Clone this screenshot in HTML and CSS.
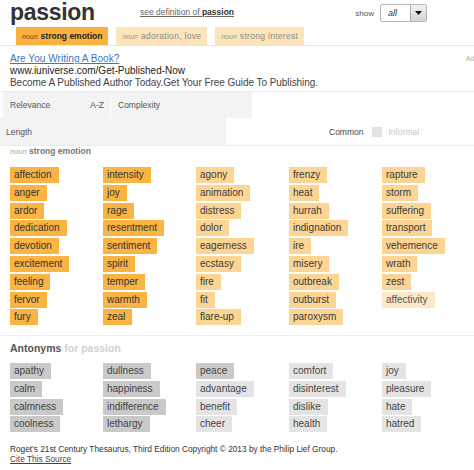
FILE: index.html
```html
<!DOCTYPE html>
<html>
<head>
<meta charset="utf-8">
<link rel="stylesheet" href="styles.css">
</head>
<body>
<div class="top">
  <h1 class="word">passion</h1>
  <a class="def" href="#">see definition of <b>passion</b></a>
  <div class="show">
    <span class="show-label">show</span>
    <div class="select">
      <span class="val">all</span>
      <span class="btn"><svg width="7" height="4" viewBox="0 0 7 4"><path d="M0 0H7L3.5 4Z" fill="#111"/></svg></span>
    </div>
  </div>
</div>
<div class="tabs">
  <span class="tab active"><i>noun</i>strong emotion</span>
  <span class="tab"><i>noun</i>adoration, love</span>
  <span class="tab"><i>noun</i>strong interest</span>
</div>
<div class="ad">
  <div class="ad-lines">
    <a class="ad-title" href="#">Are You Writing A Book?</a>
    <div class="ad-url">www.iuniverse.com/Get-Published-Now</div>
    <div class="ad-text">Become A Published Author Today.Get Your Free Guide To Publishing.</div>
  </div>
  <span class="ad-label">Ad</span>
</div>
<div class="filters">
  <div class="frow1">
    <div class="cell1"><span>Relevance</span><span>A-Z</span></div>
    <div class="cell2">Complexity</div>
  </div>
  <div class="frow2">
    <div class="len">Length</div>
    <span class="common">Common</span>
    <span class="chk"></span>
    <span class="informal">Informal</span>
  </div>
</div>
<div class="sense"><i>noun</i> strong emotion</div>
<div class="grid syn">
  <span class="t s1">affection</span><span class="t s1">anger</span><span class="t s1">ardor</span><span class="t s1">dedication</span><span class="t s1">devotion</span><span class="t s1">excitement</span><span class="t s1">feeling</span><span class="t s1">fervor</span><span class="t s1">fury</span>
  <span class="t s1">intensity</span><span class="t s1">joy</span><span class="t s1">rage</span><span class="t s1">resentment</span><span class="t s1">sentiment</span><span class="t s1">spirit</span><span class="t s1">temper</span><span class="t s1">warmth</span><span class="t s1">zeal</span>
  <span class="t s2">agony</span><span class="t s2">animation</span><span class="t s2">distress</span><span class="t s2">dolor</span><span class="t s2">eagerness</span><span class="t s2">ecstasy</span><span class="t s2">fire</span><span class="t s2">fit</span><span class="t s2">flare-up</span>
  <span class="t s2">frenzy</span><span class="t s2">heat</span><span class="t s2">hurrah</span><span class="t s2">indignation</span><span class="t s2">ire</span><span class="t s2">misery</span><span class="t s2">outbreak</span><span class="t s2">outburst</span><span class="t s2">paroxysm</span>
  <span class="t s2">rapture</span><span class="t s2">storm</span><span class="t s2">suffering</span><span class="t s2">transport</span><span class="t s2">vehemence</span><span class="t s2">wrath</span><span class="t s2">zest</span><span class="t s3">affectivity</span>
</div>
<div class="ant">
  <div class="ant-head">Antonyms <span>for passion</span></div>
  <div class="grid antg">
    <span class="t a1">apathy</span><span class="t a1">calm</span><span class="t a1">calmness</span><span class="t a1">coolness</span>
    <span class="t a1">dullness</span><span class="t a1">happiness</span><span class="t a1">indifference</span><span class="t a1">lethargy</span>
    <span class="t a1">peace</span><span class="t a2">advantage</span><span class="t a2">benefit</span><span class="t a2">cheer</span>
    <span class="t a2">comfort</span><span class="t a2">disinterest</span><span class="t a2">dislike</span><span class="t a2">health</span>
    <span class="t a2">joy</span><span class="t a2">pleasure</span><span class="t a2">hate</span><span class="t a2">hatred</span>
  </div>
</div>
<div class="footer">
  <div>Roget's 21st Century Thesaurus, Third Edition Copyright © 2013 by the Philip Lief Group.</div>
  <a href="#">Cite This Source</a>
</div>
</body>
</html>
```
FILE: styles.css
```css
* { box-sizing: border-box; }
body {
  margin: 0;
  background: #fff;
  font-family: "Liberation Sans", Arial, sans-serif;
  color: #333;
}
a { color: inherit; }

.top {
  display: flex;
  align-items: flex-start;
  height: 27px;
  padding-left: 10px;
}
.word {
  margin: 0;
  width: 130px;
  font-size: 23px;
  line-height: 24px;
  font-weight: bold;
  letter-spacing: -0.3px;
  color: #333;
}
.def {
  margin-top: 7px;
  font-size: 8.5px;
  line-height: 10px;
  color: #666;
}
.def b { color: #333; }
.show {
  margin-left: auto;
  margin-right: 47px;
  margin-top: 4px;
  display: flex;
  align-items: center;
  gap: 6px;
}
.show-label { font-size: 8px; color: #555; }
.select {
  width: 47px;
  height: 18px;
  border: 1px solid #b5b5b5;
  border-radius: 2px;
  display: flex;
  background: #fff;
}
.val {
  flex: 1;
  font-size: 9px;
  line-height: 16px;
  padding-left: 7px;
  font-style: italic;
  color: #333;
}
.btn {
  width: 16px;
  border-left: 1px solid #aaa;
  background: linear-gradient(#f3f3f3, #d2d2d2);
  display: flex;
  align-items: center;
  justify-content: center;
}

.tabs {
  display: flex;
  gap: 8px;
  padding-left: 16px;
  height: 19px;
  border-bottom: 1px solid #e6e6e6;
}
.tab {
  height: 18px;
  padding: 0 6px;
  line-height: 18px;
  font-size: 8.5px;
  letter-spacing: 0.3px;
  background: #fde5bb;
  color: #8a8a8a;
}
.tab i {
  font-size: 7px;
  letter-spacing: 0;
  margin-right: 3px;
  color: #999;
}
.tab.active {
  background: #f9b23e;
  color: #222;
  font-weight: bold;
  letter-spacing: 0;
}
.tab.active i { font-weight: normal; color: #6b5020; }

.ad {
  display: flex;
  padding: 7px 0 2px 10px;
  border-bottom: 1px solid #ececec;
}
.ad-lines { font-size: 10px; line-height: 12px; }
.ad-title { color: #3b78c4; letter-spacing: 0.05px; display: block; }
.ad-url { color: #222; }
.ad-text { color: #444; letter-spacing: -0.05px; }
.ad-label {
  margin-left: auto;
  font-size: 6.5px;
  line-height: 8px;
  color: #aaa;
  margin-top: 2px;
}

.filters {
  border-bottom: 1px solid #ececec;
  font-size: 8.5px;
  color: #555;
}
.frow1 {
  display: flex;
  margin-left: 3px;
  width: 249px;
  height: 26px;
  background: #f3f3f3;
}
.cell1 {
  width: 108px;
  display: flex;
  align-items: center;
  justify-content: space-between;
  padding: 0 6px 0 7px;
  border-right: 1px solid #fff;
}
.cell2 {
  display: flex;
  align-items: center;
  padding-left: 7px;
}
.frow2 {
  display: flex;
  align-items: center;
  height: 27px;
}
.len {
  width: 226px;
  height: 100%;
  background: #f3f3f3;
  padding-left: 6px;
  display: flex;
  align-items: center;
}
.common { margin-left: 103px; color: #444; }
.chk {
  width: 10px;
  height: 10px;
  background: #e2e2e2;
  margin: 0 6px 0 9px;
}
.informal { color: #c8c8c8; }

.sense {
  padding-left: 10px;
  font-size: 8.5px;
  line-height: 10px;
  color: #777;
  font-weight: bold;
}
.sense i { font-weight: normal; font-size: 7.5px; color: #aaa; }

.grid {
  display: grid;
  grid-template-columns: repeat(5, 93px);
  grid-auto-flow: column;
  padding-left: 10px;
}
.syn {
  margin-top: 10px;
  grid-template-rows: repeat(9, 16px);
  row-gap: 1.8px;
}
.t {
  justify-self: start;
  padding: 0 7px 0 4px;
  font-size: 10px;
  line-height: 16px;
  color: #333;
}
.s1 { background: #f9b444; }
.s2 { background: #fcd594; color: #3a3a3a; }
.s3 { background: #fde9c9; color: #555; }

.ant {
  margin-top: 10px;
  border-top: 1px solid #eee;
  padding-top: 6px;
}
.ant-head {
  padding-left: 10px;
  font-size: 10.5px;
  line-height: 12px;
  font-weight: bold;
  color: #555;
}
.ant-head span { color: #d0d0d0; }
.antg {
  margin-top: 9px;
  grid-template-rows: repeat(4, 16px);
  row-gap: 1.6px;
}
.a1 { background: #c9c9c9; color: #444; }
.a2 { background: #e4e4e4; color: #444; }

.footer {
  margin-top: 12px;
  padding-left: 10px;
  font-size: 8.3px;
  line-height: 10px;
  color: #333;
}
.footer a { color: #444; }
```
